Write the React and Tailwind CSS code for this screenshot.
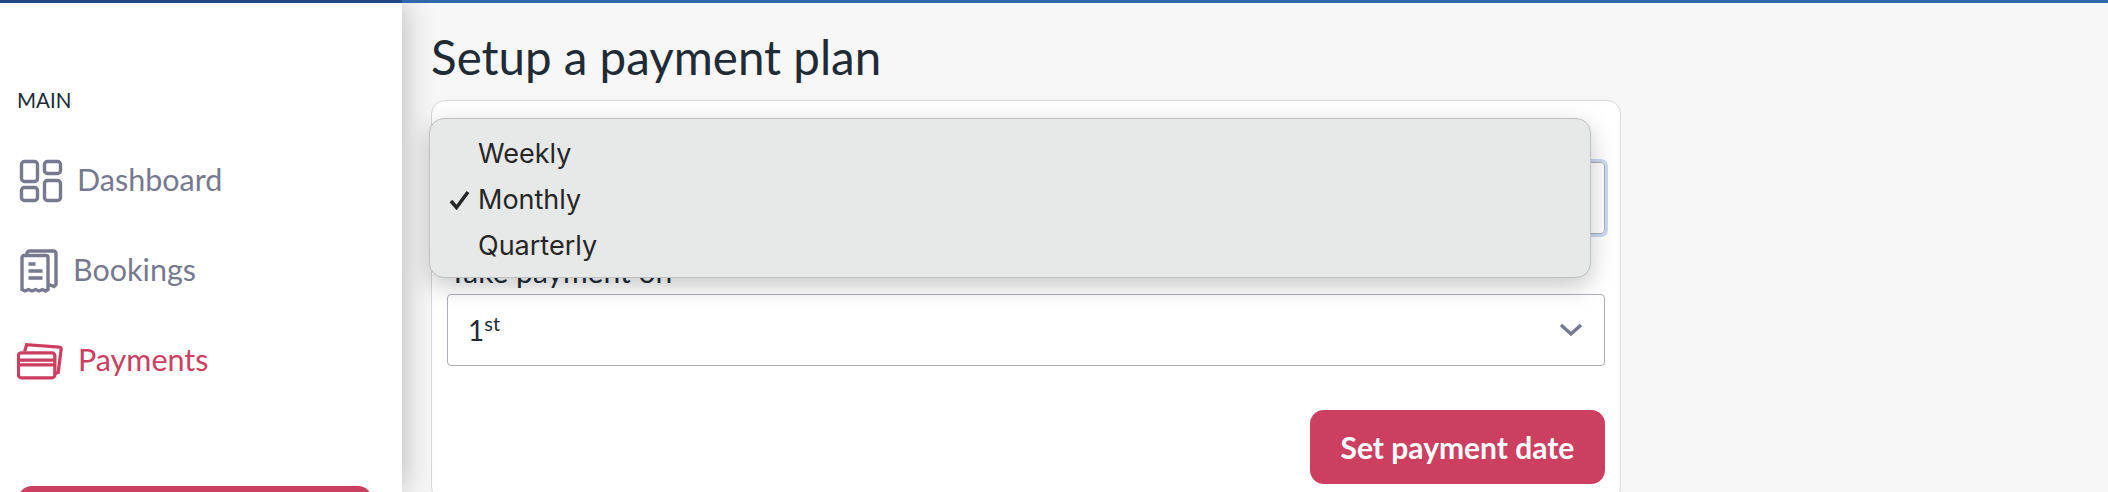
const DashboardIcon = () => (
  <svg width="44" height="44" viewBox="0 0 44 44" fill="none" stroke="#777a8f" strokeWidth="3.400" className="ml-px shrink-0">
    <rect x="2.500" y="2.500" width="16" height="20" rx="3" />
    <rect x="25.500" y="2.500" width="16" height="12" rx="3" />
    <rect x="2.500" y="28.500" width="16" height="13" rx="3" />
    <rect x="25.500" y="21.500" width="16" height="20" rx="3" />
  </svg>
);

const BookingsIcon = () => (
  <svg width="40" height="44" viewBox="0 0 40 44" fill="none" stroke="#777a8f" strokeWidth="3.400" className="ml-[2px] shrink-0">
    <path d="M2 8.500a2 2 0 0 1 2-2h22a2 2 0 0 1 2 2v32l-2.500 1.500-3-1.500-3.500 1.500-3.500-1.500-3.500 1.500-3.500-1.500-3.500 1.500-3-1.500z" />
    <path d="M7 6.500v-2a2.500 2.500 0 0 1 2.500-2.500h24a2.500 2.500 0 0 1 2.500 2.500v31l-2 2-5-2" />
    <path d="M8.500 15h7M8.500 22h14M8.500 29h14" />
  </svg>
);

const PaymentsIcon = () => (
  <svg width="46" height="40" viewBox="0 0 48 40" fill="none" stroke="#cc3f61" strokeWidth="3.400" className="ml-px shrink-0">
    <rect x="1.500" y="11.500" width="38" height="26" rx="3" />
    <path d="M1.500 19h38M1.500 24h38" />
    <path d="M8 10l2-7 34 2.500a2 2 0 0 1 2 2.500l-3 24-3.500 1" />
  </svg>
);

const NavItem = ({ icon, label, active, gap }) => (
  <div className={`flex items-center h-[90px] ${gap} ${active ? "text-[#cc3f61]" : "text-[#777a8f]"}`}>
    {icon}
    <span className="pb-[2px] text-[30.500px]">{label}</span>
  </div>
);

const Sidebar = () => (
  <aside className="relative z-10 w-[402px] shrink-0 bg-white pt-[85px] pl-[17px] pr-[30px] shadow-[0_0_32px_rgba(0,0,0,0.28)]">
    <div className="h-[48px] text-[20.500px] leading-6 text-[#212b36]">MAIN</div>
    <div className="pl-[1px]">
      <NavItem icon={<DashboardIcon />} label="Dashboard" gap="gap-[14px]" />
      <NavItem icon={<BookingsIcon />} label="Bookings" gap="gap-[13px]" />
    </div>
    <div className="-ml-px">
      <NavItem icon={<PaymentsIcon />} label="Payments" active gap="gap-[15px]" />
    </div>
    <button className="ml-px mt-[80px] h-[60px] w-[354px] rounded-[14px] bg-[#cc3f61]" />
  </aside>
);

const PopupMenu = () => (
  <div className="absolute left-[-3px] top-[17px] z-20 h-[160px] w-[1162px] rounded-[15px] border border-[#bfc0c0] bg-[#e7e8e8] py-[12px] pl-[48px] font-['Inter',sans-serif] text-[27px] text-[#262626] shadow-[0_8px_24px_rgba(0,0,0,0.22)]">
    {["Weekly", "Monthly", "Quarterly"].map((option) => (
      <div key={option} className="relative flex h-[46px] items-center">
        {option === "Monthly" && (
          <svg width="22" height="20" viewBox="0 0 22 20" fill="none" stroke="#262626" strokeWidth="3.500" className="absolute left-[-29px] top-[13px]">
            <path d="M2 11l5.500 6.500L19 2" />
          </svg>
        )}
        {option}
      </div>
    ))}
  </div>
);

const PaymentCard = () => (
  <div className="relative w-[1190px] rounded-[14px] border border-[#d9d9d9] bg-white px-[15px] pb-[16px] pt-[61px]">
    <PopupMenu />
    <div className="flex h-[72px] items-center rounded-[4px] border border-[#adaeb8] px-[22px] text-[26px] text-[#212b36] shadow-[0_0_0_3px_#c9d9f2]">
      Monthly
    </div>
    <label className="block h-[60px] pl-[2px] pt-[20px] text-[30px] leading-[34px] text-[#212b36]">Take payment on</label>
    <div className="flex h-[72px] items-center justify-between rounded-[4px] border border-[#adaeb8] pl-[20px] pr-[21px] text-[#212b36]">
      <span className="text-[28px]">
        1<sup className="text-[20px]">st</sup>
      </span>
      <svg width="24" height="14" viewBox="0 0 24 14" fill="none" stroke="#777a8f" strokeWidth="3.500">
        <path d="M2 2l10 9 10-9" />
      </svg>
    </div>
    <div className="mt-[44px] flex justify-end">
      <button className="h-[74px] w-[295px] rounded-[14px] bg-[#cc3f61] text-[30px] font-bold text-white">
        Set payment date
      </button>
    </div>
  </div>
);

export default function App() {
  return (
    <div className="flex h-[492px] flex-col overflow-hidden bg-[#f7f7f7] font-['Lato',sans-serif]">
      <div className="z-20 flex h-[3px] shrink-0 bg-[#3068ae]">
        <div className="w-[402px] bg-[#1f4a8a]" />
      </div>
      <div className="flex min-h-0 flex-1">
        <Sidebar />
        <main className="pl-[29px]">
          <h1 className="h-[97px] pt-[24px] text-[47.500px] leading-[60px] text-[#212b36]">Setup a payment plan</h1>
          <PaymentCard />
        </main>
      </div>
    </div>
  );
}
